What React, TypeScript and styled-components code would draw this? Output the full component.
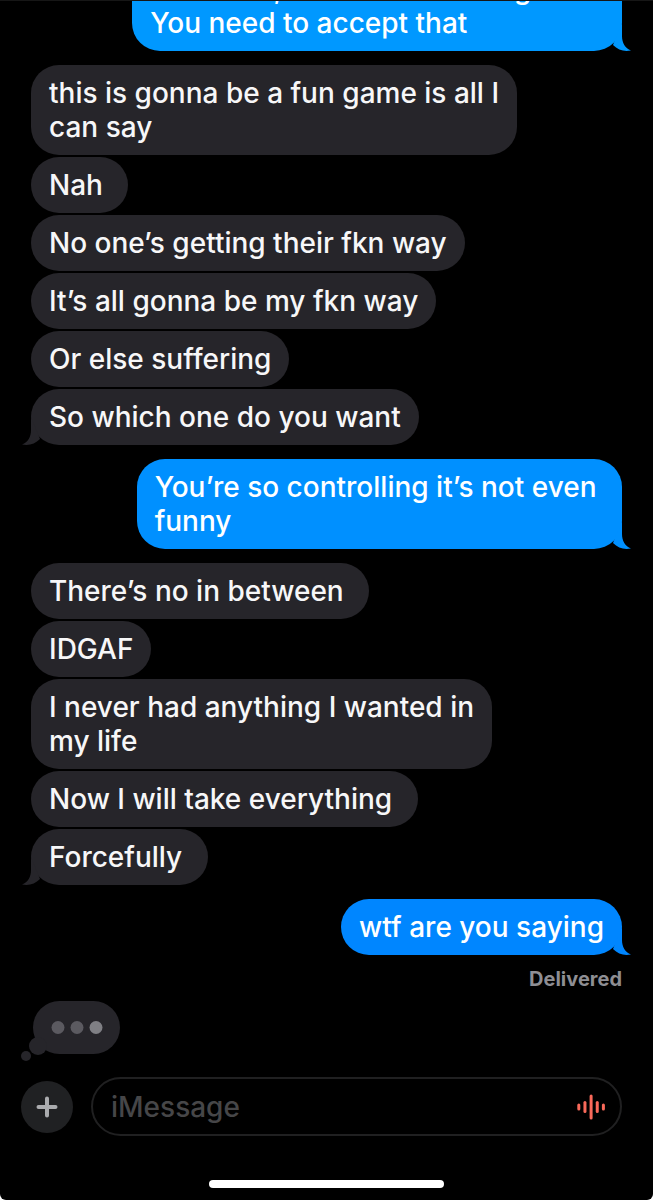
import React from "react";
import styled, { createGlobalStyle } from "styled-components";

const GlobalStyle = createGlobalStyle`
  * { box-sizing: border-box; }
  html { background: #fff; }
  body { margin: 0; }
`;

const Screen = styled.main`
  display: flex;
  flex-direction: column;
  height: 100vh;
  overflow: hidden;
  background: #000;
  border-top: 1px solid #161616;
  border-radius: 0 0 6px 6px;
  font-family: Inter, "Liberation Sans", sans-serif;
  font-weight: 500;
`;

const Thread = styled.section`
  flex: 1;
  min-height: 0;
  overflow: hidden;
  display: flex;
  flex-direction: column;
  justify-content: flex-end;
  gap: 14px;
  padding: 0 31px;
`;

const Group = styled.div<{ $mine?: boolean }>`
  display: flex;
  flex-direction: column;
  flex-shrink: 0;
  align-items: ${(p) => (p.$mine ? "flex-end" : "flex-start")};
  gap: 2px;
`;

const Bubble = styled.p<{ $color: string }>`
  position: relative;
  margin: 0;
  padding: 11px 18px;
  border-radius: 28px;
  background: ${(p) => p.$color};
  color: ${(p) => (p.$color === "#26252a" ? "#f7f7f8" : "#fff")};
  font-size: 28px;
  line-height: 34px;
  white-space: pre;
`;

const TailSvg = styled.svg<{ $mine?: boolean }>`
  position: absolute;
  bottom: 0;
  ${(p) => (p.$mine ? "right: -9px;" : "left: -9px; transform: scaleX(-1);")}
`;

const Receipt = styled.div`
  margin-top: 10px;
  color: #8e8e93;
  font-size: 20px;
  font-weight: 700;
  line-height: 24px;
`;

const Typing = styled.svg`
  display: block;
  flex-shrink: 0;
  margin: -4px 0 0 -10px;
`;

const Composer = styled.form`
  display: flex;
  align-items: center;
  gap: 18px;
  padding: 15px 31px 0 21px;
`;

const AddButton = styled.button`
  display: flex;
  align-items: center;
  justify-content: center;
  flex-shrink: 0;
  width: 52px;
  height: 52px;
  padding: 0;
  border: 0;
  border-radius: 50%;
  background: #202123;
`;

const Field = styled.div`
  display: flex;
  align-items: center;
  flex: 1;
  min-width: 0;
  height: 59px;
  padding: 0 14px 0 18px;
  border: 2px solid #202021;
  border-radius: 30px;
`;

const TextInput = styled.input`
  flex: 1;
  min-width: 0;
  padding: 0;
  border: 0;
  outline: 0;
  background: transparent;
  color: #fff;
  font: inherit;
  font-size: 28px;
  line-height: 34px;
  &::placeholder { color: #464648; opacity: 1; }
`;

const VoiceButton = styled.button`
  display: flex;
  flex-shrink: 0;
  padding: 0;
  border: 0;
  background: transparent;
`;

const HomeArea = styled.footer`
  display: flex;
  justify-content: center;
  padding: 44px 0 12px;
`;

const HomeBar = styled.div`
  width: 36%;
  height: 8px;
  border-radius: 4px;
  background: #fff;
`;

const GREY = "#26252a";

type Conversation = { mine?: boolean; color: string; texts: string[]; receipt?: string };

// Trailing spaces are kept as typed, so they widen their bubbles.
const conversation: Conversation[] = [
  { mine: true, color: "#0098ff", texts: ["I am here, as it is not coming back\nYou need to accept that"] },
  {
    color: GREY,
    texts: [
      "this is gonna be a fun game is all I\ncan say",
      "Nah ",
      "No one’s getting their fkn way",
      "It’s all gonna be my fkn way",
      "Or else suffering",
      "So which one do you want",
    ],
  },
  { mine: true, color: "#0090ff", texts: ["You’re so controlling it’s not even \nfunny"] },
  {
    color: GREY,
    texts: [
      "There’s no in between ",
      "IDGAF",
      "I never had anything I wanted in\nmy life",
      "Now I will take everything ",
      "Forcefully ",
    ],
  },
  { mine: true, color: "#0086ff", texts: ["wtf are you saying"], receipt: "Delivered" },
];

const Tail = ({ mine, color }: { mine?: boolean; color: string }) => (
  <TailSvg $mine={mine} width="37" height="28" viewBox="0 0 37 28" aria-hidden="true">
    <path d="M28 0V13C28 20 31 25 37 27.5C30 29 24 27 19 22Z" fill={color} />
  </TailSvg>
);

const waveBars = [7, 12, 25, 12, 7];

export default function App() {
  return (
    <>
      <GlobalStyle />
      <Screen>
        <Thread aria-label="Conversation">
          {conversation.map((group, i) => (
            <Group key={i} $mine={group.mine}>
              {group.texts.map((text, j) => (
                <Bubble key={j} $color={group.color}>
                  {text}
                  {j === group.texts.length - 1 && <Tail mine={group.mine} color={group.color} />}
                </Bubble>
              ))}
              {group.receipt && <Receipt>{group.receipt}</Receipt>}
            </Group>
          ))}
          <Typing width="99" height="61" viewBox="0 0 99 61" role="img" aria-label="Typing">
            <g fill={GREY}>
              <rect x="12" y="0" width="87" height="53" rx="26.5" />
              <circle cx="17" cy="45" r="9" />
              <circle cx="5" cy="55" r="5" />
            </g>
            <circle cx="37" cy="26.5" r="6.5" fill="#5b5a60" />
            <circle cx="56" cy="26.5" r="6.5" fill="#5b5a60" />
            <circle cx="75" cy="26.5" r="6.5" fill="#7f7f84" />
          </Typing>
        </Thread>
        <Composer onSubmit={(e) => e.preventDefault()}>
          <AddButton type="button" aria-label="Add attachment">
            <svg width="22" height="22" viewBox="0 0 22 22" stroke="#aaabae" strokeWidth="4" strokeLinecap="round">
              <path d="M11 2.5V19.5M2.5 11H19.5" />
            </svg>
          </AddButton>
          <Field>
            <TextInput type="text" aria-label="Message" placeholder="iMessage" />
            <VoiceButton type="button" aria-label="Record audio">
              <svg width="30" height="26" viewBox="0 0 30 26" fill="#f9695a">
                {waveBars.map((h, i) => (
                  <rect key={i} x={1.3 + i * 6.15} y={13 - h / 2} width="3" height={h} rx="1.5" />
                ))}
              </svg>
            </VoiceButton>
          </Field>
        </Composer>
        <HomeArea>
          <HomeBar />
        </HomeArea>
      </Screen>
    </>
  );
}
